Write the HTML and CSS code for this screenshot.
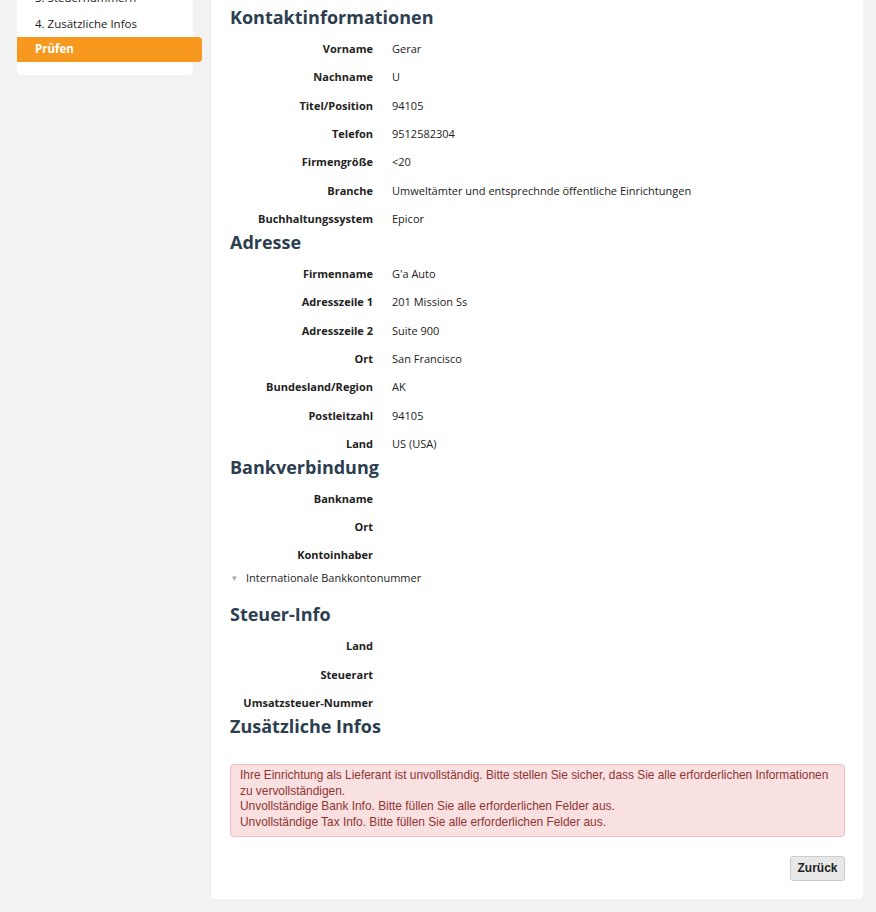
FILE: index.html
```html
<!DOCTYPE html>
<html lang="de">
<head>
<meta charset="utf-8">
<title>Prüfen</title>
<link rel="stylesheet" href="styles.css">
</head>
<body>
<div class="layout">
  <aside class="sidebar">
    <div class="step">1. Kontakt</div>
    <div class="step">2. Bankverbindung</div>
    <div class="step">3. Steuernummern</div>
    <div class="step">4. Zusätzliche Infos</div>
    <div class="step active">Prüfen</div>
  </aside>
  <main class="panel">
    <section class="section">
      <h2 class="section-title">Kontaktinformationen</h2>
      <dl class="fields">
        <dt>Vorname</dt><dd>Gerar</dd>
        <dt>Nachname</dt><dd>U</dd>
        <dt>Titel/Position</dt><dd>94105</dd>
        <dt>Telefon</dt><dd>9512582304</dd>
        <dt>Firmengröße</dt><dd>&lt;20</dd>
        <dt>Branche</dt><dd>Umweltämter und entsprechnde öffentliche Einrichtungen</dd>
        <dt>Buchhaltungssystem</dt><dd>Epicor</dd>
      </dl>
    </section>
    <section class="section">
      <h2 class="section-title">Adresse</h2>
      <dl class="fields">
        <dt>Firmenname</dt><dd>G'a Auto</dd>
        <dt>Adresszeile 1</dt><dd>201 Mission Ss</dd>
        <dt>Adresszeile 2</dt><dd>Suite 900</dd>
        <dt>Ort</dt><dd>San Francisco</dd>
        <dt>Bundesland/Region</dt><dd>AK</dd>
        <dt>Postleitzahl</dt><dd>94105</dd>
        <dt>Land</dt><dd>US (USA)</dd>
      </dl>
    </section>
    <section class="section">
      <h2 class="section-title">Bankverbindung</h2>
      <dl class="fields">
        <dt>Bankname</dt><dd></dd>
        <dt>Ort</dt><dd></dd>
        <dt>Kontoinhaber</dt><dd></dd>
      </dl>
      <div class="toggle"><span class="caret">&#9662;</span><span>Internationale Bankkontonummer</span></div>
    </section>
    <section class="section">
      <h2 class="section-title">Steuer-Info</h2>
      <dl class="fields">
        <dt>Land</dt><dd></dd>
        <dt>Steuerart</dt><dd></dd>
        <dt>Umsatzsteuer-Nummer</dt><dd></dd>
      </dl>
    </section>
    <section class="section">
      <h2 class="section-title">Zusätzliche Infos</h2>
    </section>
    <div class="alert">
      <div>Ihre Einrichtung als Lieferant ist unvollständig. Bitte stellen Sie sicher, dass Sie alle erforderlichen Informationen zu vervollständigen.</div>
      <div>Unvollständige Bank Info. Bitte füllen Sie alle erforderlichen Felder aus.</div>
      <div>Unvollständige Tax Info. Bitte füllen Sie alle erforderlichen Felder aus.</div>
    </div>
    <div class="actions">
      <button class="btn" type="button">Zurück</button>
    </div>
  </main>
</div>
</body>
</html>
```
FILE: styles.css
```css
html, body {
  margin: 0;
  padding: 0;
}
body {
  background: #f2f2f2;
  font-family: "Open Sans", "Noto Sans", sans-serif;
  font-size: 11px;
  color: #222;
}
.layout {
  display: flex;
  align-items: flex-start;
  gap: 18px;
  padding-left: 17px;
  margin-top: -80px;
}
.sidebar {
  width: 176px;
  flex: none;
  background: #fff;
  border-radius: 0 0 4px 4px;
  padding: 13px 0 13px;
  box-sizing: border-box;
}
.step {
  height: 26px;
  line-height: 26px;
  padding-left: 18px;
  font-size: 11.5px;
  color: #222;
}
.step.active {
  height: 25px;
  line-height: 24px;
  background: #f7991f;
  color: #fff;
  font-weight: 700;
  margin-right: -9px;
  border-radius: 0 4px 4px 0;
}
.panel {
  width: 652px;
  flex: none;
  box-sizing: border-box;
  background: #fff;
  border-radius: 0 0 4px 4px;
  padding: 87px 18px 18px 19px;
}
.section-title {
  margin: 0 0 6.6px;
  font-size: 18px;
  line-height: 20px;
  font-weight: 700;
  color: #2c3e50;
}
.fields {
  margin: 0;
  display: grid;
  grid-template-columns: 143px 1fr;
  column-gap: 19px;
  grid-auto-rows: 28.33px;
  align-items: center;
}
.fields dt {
  text-align: right;
  font-weight: 700;
  white-space: nowrap;
  padding-top: 1.5px;
}
.fields dd {
  margin: 0;
  padding-top: 1.5px;
}
.toggle {
  display: flex;
  align-items: center;
  gap: 8px;
  margin: 2px 0 18px;
  line-height: 16px;
}
.caret {
  color: #aaa;
  font-size: 9px;
  width: 8px;
  text-align: center;
}
.alert {
  margin-top: 28px;
  background: #f9e0e1;
  border: 1px solid #f1bcc2;
  border-radius: 4px;
  color: #8e3533;
  font-family: "Liberation Sans", Arial, sans-serif;
  font-size: 11.9px;
  line-height: 15.7px;
  padding: 3px 9px 5px;
}
.actions {
  display: flex;
  justify-content: flex-end;
  margin-top: 19px;
}
.btn {
  height: 25px;
  width: 55px;
  padding: 0;
  border: 1px solid #ccc;
  border-radius: 3px;
  background: #e8e8e8;
  color: #222;
  font-family: "Liberation Sans", Arial, sans-serif;
  font-size: 12px;
  font-weight: 700;
}
```
